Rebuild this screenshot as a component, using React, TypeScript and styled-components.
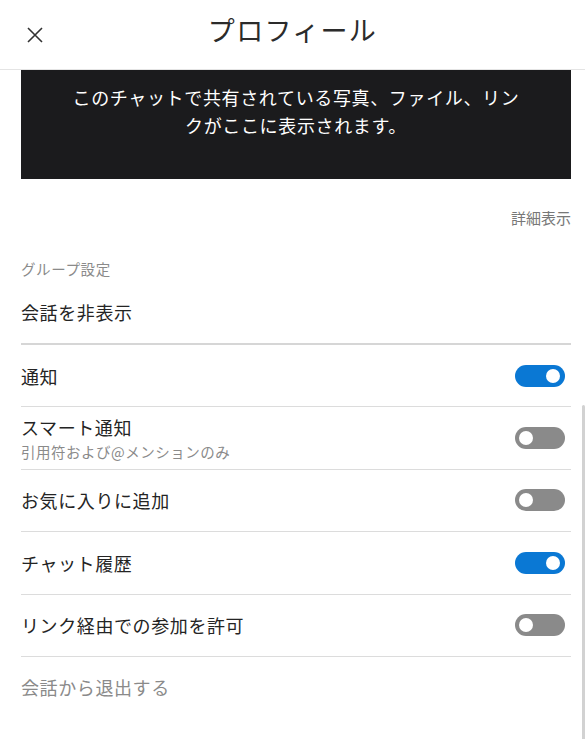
import React, { useState } from "react";
import styled, { createGlobalStyle } from "styled-components";

const GlobalStyle = createGlobalStyle`
  html, body {
    margin: 0;
    padding: 0;
    background: #fff;
  }
  body {
    font-family: "Noto Sans CJK JP", "Noto Sans", sans-serif;
    color: #242424;
  }
`;

interface ISetting {
  label: string;
  sub?: string;
  on: boolean;
}

const initialSettings: ISetting[] = [
  { label: "通知", on: true },
  { label: "スマート通知", sub: "引用符および@メンションのみ", on: false },
  { label: "お気に入りに追加", on: false },
  { label: "チャット履歴", on: true },
  { label: "リンク経由での参加を許可", on: false },
];

const App: React.FC = () => {
  const [settings, setSettings] = useState<ISetting[]>(initialSettings);

  const toggle = (index: number) => {
    setSettings((prev) =>
      prev.map((item, i) => (i === index ? { ...item, on: !item.on } : item))
    );
  };

  return (
    <>
      <GlobalStyle />
      <Page>
        <Header>
          <CloseButton aria-label="閉じる">
            <svg width="16" height="16" viewBox="0 0 16 16">
              <path
                d="M1 1 L15 15 M15 1 L1 15"
                stroke="#333"
                strokeWidth="1.6"
                fill="none"
              />
            </svg>
          </CloseButton>
          <Title>プロフィール</Title>
          <span />
        </Header>
        <Content>
          <MediaBox>
            <MediaText>
              このチャットで共有されている写真、ファイル、リンクがここに表示されます。
            </MediaText>
          </MediaBox>
          <MoreLink>詳細表示</MoreLink>
          <SectionLabel>グループ設定</SectionLabel>
          <HideRow>会話を非表示</HideRow>
          {settings.map((item, index) => (
            <Row key={index}>
              <RowText>
                <RowLabel>{item.label}</RowLabel>
                {item.sub && <RowSub>{item.sub}</RowSub>}
              </RowText>
              <Switch $on={item.on} onClick={() => toggle(index)}>
                <Knob $on={item.on} />
              </Switch>
            </Row>
          ))}
          <LeaveRow>会話から退出する</LeaveRow>
        </Content>
        <ScrollThumb />
      </Page>
    </>
  );
};

const Page = styled.div`
  position: relative;
  width: 585px;
  height: 739px;
  overflow: hidden;
  background: #fff;
`;

const Header = styled.div`
  display: grid;
  grid-template-columns: 1fr auto 1fr;
  align-items: center;
  height: 70px;
  border-bottom: 1px solid #e4e4e4;
  box-sizing: border-box;
`;

const CloseButton = styled.button`
  display: flex;
  align-items: center;
  justify-content: center;
  justify-self: start;
  width: 16px;
  height: 16px;
  margin-left: 27px;
  padding: 0;
  border: none;
  background: transparent;
  cursor: pointer;
`;

const Title = styled.div`
  font-size: 27px;
  letter-spacing: 1.3px;
  line-height: 36px;
  color: #2b2b2b;
  padding-bottom: 10px;
`;

const Content = styled.div`
  display: flex;
  flex-direction: column;
  padding: 0 14px 0 21px;
`;

const MediaBox = styled.div`
  height: 109px;
  box-sizing: border-box;
  padding: 13px 50px 0;
  background: #1b1b1d;
`;

const MediaText = styled.div`
  color: #fff;
  font-size: 18px;
  letter-spacing: 0.65px;
  line-height: 28px;
  text-align: center;
`;

const MoreLink = styled.div`
  align-self: flex-end;
  margin-top: 29px;
  font-size: 15px;
  line-height: 20px;
  color: #777;
`;

const SectionLabel = styled.div`
  margin-top: 31px;
  font-size: 14.5px;
  letter-spacing: 0.6px;
  line-height: 20px;
  color: #8a8a8a;
`;

const HideRow = styled.div`
  padding: 21px 0 19px;
  font-size: 18px;
  letter-spacing: 0.6px;
  line-height: 24px;
  border-bottom: 2px solid #d6d6d6;
`;

const Row = styled.div`
  display: flex;
  align-items: center;
  justify-content: space-between;
  min-height: 61.4px;
  border-bottom: 1px solid #dcdcdc;
`;

const RowText = styled.div`
  display: flex;
  flex-direction: column;
  gap: 3px;
`;

const RowLabel = styled.div`
  font-size: 18px;
  letter-spacing: 0.6px;
  line-height: 24px;
  color: #242424;
`;

const RowSub = styled.div`
  font-size: 14.5px;
  letter-spacing: 0.5px;
  line-height: 20px;
  color: #8a8a8a;
`;

const Switch = styled.div<{ $on: boolean }>`
  position: relative;
  width: 50px;
  height: 22px;
  margin-right: 6px;
  border-radius: 11px;
  background: ${(p) => (p.$on ? "#0a78d4" : "#8a8a8a")};
  cursor: pointer;
  flex-shrink: 0;
`;

const Knob = styled.div<{ $on: boolean }>`
  position: absolute;
  top: 4px;
  left: ${(p) => (p.$on ? "31px" : "4px")};
  width: 14px;
  height: 14px;
  border-radius: 50%;
  background: #fff;
`;

const LeaveRow = styled.div`
  padding-top: 18px;
  font-size: 18px;
  letter-spacing: 0.6px;
  line-height: 24px;
  color: #8a8a8a;
`;

const ScrollThumb = styled.div`
  position: absolute;
  right: 0;
  top: 405px;
  bottom: 0;
  width: 3px;
  border-radius: 2px 2px 0 0;
  background: #d2d2d2;
`;

export default App;
